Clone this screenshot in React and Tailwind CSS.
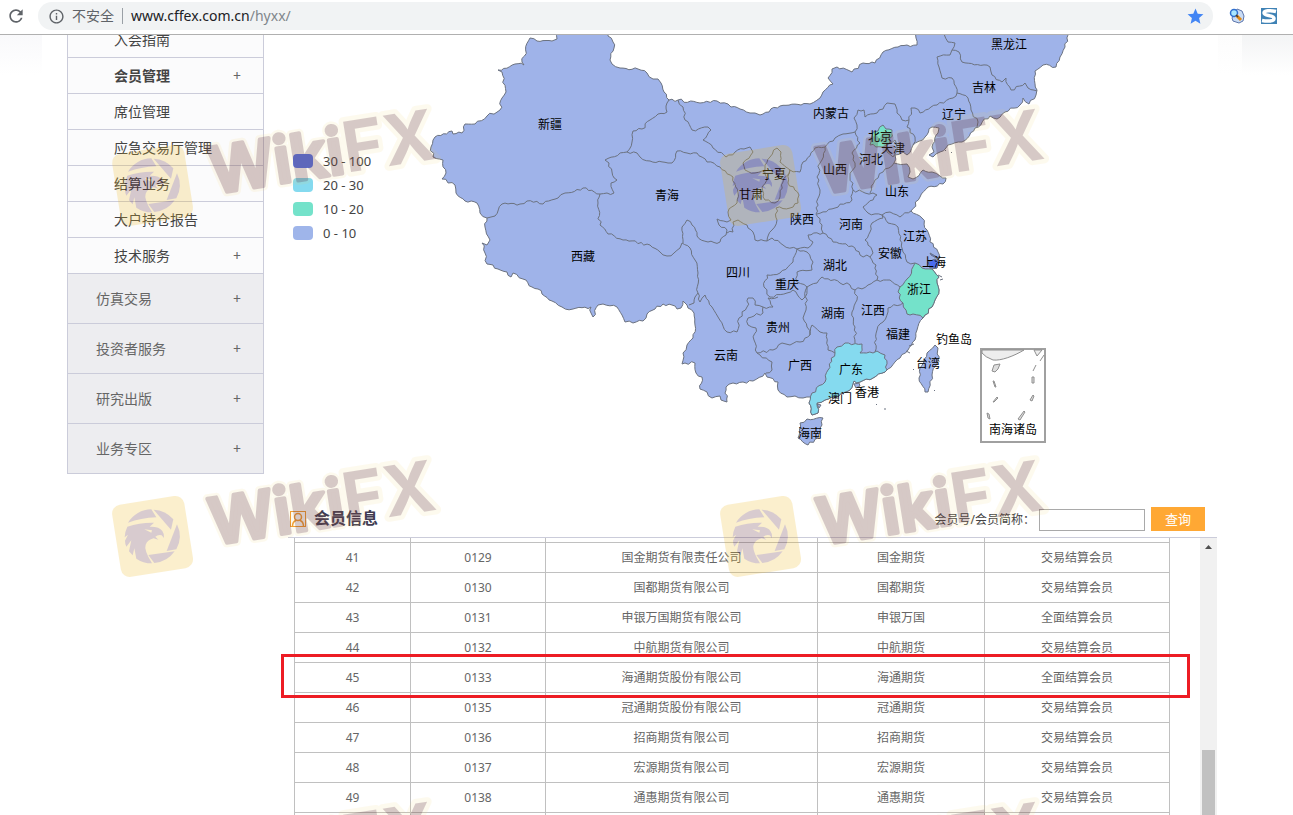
import { MdInfoOutline, MdRefresh, MdStar } from 'react-icons/md'

const subMenu = [
  { label: '入会指南' },
  { label: '会员管理', expandable: true, current: true },
  { label: '席位管理' },
  { label: '应急交易厅管理' },
  { label: '结算业务' },
  { label: '大户持仓报告' },
  { label: '技术服务', expandable: true },
]

const mainMenu = ['仿真交易', '投资者服务', '研究出版', '业务专区']

const legend = [
  { label: '30 - 100', color: 'bg-[#5475f0]' },
  { label: '20 - 30', color: 'bg-[#85daef]' },
  { label: '10 - 20', color: 'bg-[#74e2ca]' },
  { label: '0 - 10', color: 'bg-[#9fb5ea]' },
]

const members = [
  [41, '0129', '国金期货有限责任公司', '国金期货', '交易结算会员'],
  [42, '0130', '国都期货有限公司', '国都期货', '交易结算会员'],
  [43, '0131', '申银万国期货有限公司', '申银万国', '全面结算会员'],
  [44, '0132', '中航期货有限公司', '中航期货', '交易结算会员'],
  [45, '0133', '海通期货股份有限公司', '海通期货', '全面结算会员'],
  [46, '0135', '冠通期货股份有限公司', '冠通期货', '交易结算会员'],
  [47, '0136', '招商期货有限公司', '招商期货', '交易结算会员'],
  [48, '0137', '宏源期货有限公司', '宏源期货', '交易结算会员'],
  [49, '0138', '通惠期货有限公司', '通惠期货', '交易结算会员'],
]

const coast =
  '557,28 607,28 608,36 613,42 614,48 610,60 612,64 620,68 638,69 647,73 653,79 658,79 661,83 664,92 669,100 678,100 700,103 717,101 728,104 731,107 740,109 750,113 755,113 760,115 780,106 810,104 820,98 823,92 833,84 828,78 832,69 837,67 852,72 863,63 875,63 883,52 898,47 907,45 917,45 916,38 911,28 1070,28 1068,35 1065,47 1060,57 1056,67 1043,65 1035,71 1037,90 1036,95 1029,104 1023,98 1020,105 1005,112 997,119 990,116 975,128 962,142 948,145 940,152 933,157 929,155 934,152 932,147 938,133 939,128 932,127 925,137 913,145 907,155 903,152 895,155 894,163 907,164 910,172 908,177 913,179 923,170 932,172 940,176 946,178 943,184 928,187 920,197 911,211 922,218 927,230 930,242 938,252 939,258 937,268 932,269 939,277 937,283 939,290 935,300 932,307 925,315 923,318 917,330 915,340 908,350 900,358 888,369 885,372 873,378 860,382 854,381 850,390 835,397 825,400 817,403 818,413 812,415 809,403 811,397 803,398 795,396 787,397 778,390 778,382 767,377 765,373 753,381 743,382 733,383 726,387 727,402 721,400 720,396 712,398 707,392 700,389 702,377 696,373 695,363 685,363 682,364 683,353 687,345 693,338 695,325 694,313 688,308 687,305 683,301 681,308 677,309 672,305 663,304 655,309 647,314 643,321 633,323 625,322 622,315 617,307 603,304 598,305 593,317 591,313 591,307 573,309 562,307 552,301 542,294 538,289 532,287 523,279 513,273 511,277 507,272 498,269 493,265 487,264 485,253 482,243 487,245 490,240 485,227 487,218 480,213 477,203 465,201 456,193 455,185 442,179 446,173 443,160 433,157 431,147 435,137 452,131 453,134 462,133 465,124 475,124 487,116 500,110 502,98 506,92 502,72 498,70 515,64 524,65 522,62 530,38 537,41 552,41 557,39 557,28'

const borders = [
  // 新疆 / 甘肃 / 青海 / 西藏
  '669,100 667,103 667,112 658,114 650,120 642,129 633,131 632,142 627,152 605,160 609,163 612,172 617,180 611,183 614,193 600,194 583,188 565,193 558,198 543,204 527,201 520,204 502,204 495,216 487,218',
  '600,194 598,203 600,225 608,234 623,240 650,245 660,252 667,256 674,253 680,248 682,243 690,248 695,260 698,273 698,293 695,297 694,303 689,305',
  '627,152 637,153 640,157 650,161 668,163 672,163 677,151 687,153 697,153 707,162 720,167 733,177 738,193 737,203 728,212 731,220 727,222 717,219 719,225 727,230 726,235 720,242 708,242 697,236 692,225 687,220 682,227 683,243',
  '727,233 733,232 733,222 738,220 747,225 753,232 755,240 767,241 772,230 777,220 776,208 790,208 798,203 799,195 788,183 790,170',
  '678,100 683,107 685,120 692,130 708,127 711,130 703,140 713,148 726,157 735,152 750,147 753,152 743,163 745,170 755,173 765,170 765,165 770,157 777,148 781,152 780,162 790,170 800,172 803,162 815,148 825,147 835,138 843,134 855,132 857,125 854,118 858,110 864,110 865,117 877,113 883,109 887,103 895,104 897,113 902,120 909,120 911,108 915,108 920,113 937,105 953,98 957,93 952,78 942,78 939,67 937,57 950,55 952,50 955,43 948,42 944,34',
  '765,170 767,180 762,187 765,200 775,203 780,197 783,182 790,170',
  // 东北
  '952,50 959,52 962,62 990,67 992,75 1002,82 1006,78 1011,90 1025,83 1028,88 1037,91',
  '957,93 968,98 971,110 978,122 977,127',
  '909,120 907,127 915,137 913,145',
  // 华北
  '825,147 820,163 817,177 820,190 816,214 822,225 823,233 808,235 813,242 808,248 797,249 783,245 772,238 767,241',
  '855,132 860,143 852,153 855,163 850,177 853,190 852,200 835,208 817,214',
  '853,190 865,193 873,193 877,195 863,207 868,213 882,215 890,212 900,217 911,211',
  '870,193 875,180 883,172 894,163',
  '884,145 895,140 897,148 893,157 887,152 884,145',
  // 华中 / 华东
  '823,233 833,242 852,246 860,255 870,257 873,253 865,240 870,232 872,223 883,218 882,215 888,223 898,227 900,240 903,252 907,262 915,263',
  '870,257 876,265 877,280 890,280 900,287',
  '877,280 868,285 855,290 850,285 840,283 822,277 817,283 807,287 806,310 803,318 807,327 810,335 800,342 790,345 782,343 773,350 757,353',
  '855,290 857,300 852,312 855,327 855,343',
  '903,303 888,308 883,322 877,330 875,352',
  // 西南
  '797,249 793,262 780,273 767,275 764,287 770,297 787,293 793,290 802,300 805,297 807,287 797,282 797,272 812,270 813,262 807,252 797,249',
  '698,293 700,302 705,295 712,307 718,317 727,332 737,332 739,318 747,307 748,298 753,298 755,305 763,307 773,307 768,298 778,297',
  '763,307 763,313 748,318 748,325 756,328 754,340 757,353 772,362 772,370 766,373',
  '810,335 812,325 820,332 827,333 828,350 835,353',
]

const zhejiang =
  '915,263 922,268 932,269 939,277 937,283 939,290 935,300 932,307 925,315 923,318 913,314 907,314 903,303 898,292 900,287 907,279 915,263'
const guangdong =
  '835,353 837,347 845,343 862,344 860,353 873,353 877,351 885,355 887,370 885,372 873,378 860,382 854,381 850,390 835,397 825,400 817,403 818,413 812,415 809,403 812,393 825,382 828,370 835,353'
const beijing = '870,145 873,132 878,131 883,125 886,129 892,130 890,142 882,147 870,145'
const shanghai = '928,262 935,259 939,262 937,268 930,268 928,262'
const hainan = '800,423 807,419 823,418 822,425 818,438 808,445 798,438 800,423'
const taiwan = '935,345 938,348 938,360 932,375 928,392 925,392 919,378 920,368 927,353 935,345'

const provinces = [
  ['新疆', 550, 129], ['西藏', 583, 261], ['青海', 667, 200], ['甘肃', 751, 199],
  ['宁夏', 774, 179], ['内蒙古', 831, 118], ['黑龙江', 1009, 49], ['吉林', 984, 92],
  ['辽宁', 954, 119], ['北京', 880, 141], ['天津', 893, 153], ['河北', 871, 164],
  ['山西', 835, 174], ['山东', 897, 196], ['陕西', 802, 224], ['河南', 851, 229],
  ['江苏', 915, 241], ['安徽', 890, 258], ['上海', 934, 267], ['湖北', 835, 270],
  ['四川', 738, 277], ['重庆', 787, 289], ['浙江', 919, 294], ['湖南', 833, 318],
  ['江西', 873, 315], ['贵州', 778, 332], ['福建', 898, 339], ['云南', 726, 360],
  ['广西', 800, 370], ['广东', 851, 374], ['台湾', 928, 368], ['钓鱼岛', 954, 344],
  ['澳门', 840, 403], ['香港', 867, 397], ['海南', 810, 438], ['南海诸岛', 1013, 434],
]

function hash(x, y) {
  const n = Math.sin(x * 12.9898 + y * 78.233) * 43758.5453
  return n - Math.floor(n) - 0.5
}

// Splits every edge into short steps with a small sideways shift. The shift
// depends only on the edge itself, so neighbouring regions stay aligned.
function roughen(points) {
  const pts = points.split(' ').map((p) => p.split(',').map(Number))
  const out = [pts[0]]
  for (let i = 1; i < pts.length; i++) {
    const [ax, ay] = pts[i - 1]
    const [bx, by] = pts[i]
    const len = Math.hypot(bx - ax, by - ay) || 1
    const steps = Math.floor(len / 3)
    const sign = ax < bx || (ax === bx && ay < by) ? 1 : -1
    for (let s = 1; s < steps; s++) {
      const x = ax + ((bx - ax) * s) / steps
      const y = ay + ((by - ay) * s) / steps
      const shift = hash(Math.round(x * 10), Math.round(y * 10)) * 3 * sign
      out.push([x - ((by - ay) / len) * shift, y + ((bx - ax) / len) * shift])
    }
    out.push([bx, by])
  }
  return out.map(([x, y]) => `${x.toFixed(1)},${y.toFixed(1)}`).join(' ')
}

function ChinaMap() {
  return (
    <svg viewBox="423 35 794 460" className="block min-w-0 flex-1" role="img" aria-label="会员分布">
      <g stroke="#6b7280" strokeWidth="1" strokeLinejoin="round" fill="#9fb3e9">
        <polygon points={roughen(coast)} />
        {borders.map((line) => (
          <polyline key={line} points={roughen(line)} fill="none" />
        ))}
        <polygon points={roughen(hainan)} />
        <polygon points={roughen(taiwan)} />
        <polygon points={roughen(zhejiang)} fill="#74e2ca" />
        <polygon points={roughen(guangdong)} fill="#85daef" />
        <polygon points={roughen(beijing)} fill="#74e2ca" />
        <polygon points={shanghai} fill="#4a6cf0" />
        <path d="M930 253l7 4l1 2l-7-4z" fill="#5475f0" />
        <path d="M854 384l5-1l1 3l-4 2zM817 404l4 1l-2 3z" />
        <path d="M938 275l4 2M940 280l3-1M909 346l5-2M906 351l4 2M913 369l1 1M934 390l1 1M876 404l1 1M885 408v2M945 150l1 1M951 152l1 1" />
      </g>
      <g stroke="#8f8f8f" fill="none">
        <rect x="981" y="349" width="64" height="93" strokeWidth="2" stroke="#a0a0a0" />
        <path d="M982 350H1024C1014 356 1001 361 993 360Q985 357 982 353ZM1034 350h8l-5 6z" fill="#ededed" />
        <path
          d="M994 365l6-1l-2 5l-3 3l-3-1zM993 381l1 0l2 6l-1 0zM993 402l4-5l1 1l-4 4zM987 413l2 1l1 5l-2-1zM1018 419l6-8l1 1l-5 8zM1030 400l3-5l1 1l-2 5zM1032 377h2v6h-2zM1033 371l3-6M1040 361l4-6"
          fill="#ddd"
        />
      </g>
      <g className="font-['Noto_Sans','Noto_Sans_CJK_SC',sans-serif] text-[12px]" textAnchor="middle" fill="#000">
        {provinces.map(([name, x, y]) => (
          <text key={name} x={x} y={y}>
            {name}
          </text>
        ))}
      </g>
    </svg>
  )
}

function Watermark({ x, y }) {
  return (
    <g transform={`translate(${x} ${y})`}>
      <g opacity="0.22">
        <rect x="-36" y="-36" width="73" height="73" rx="9" transform="rotate(-9)" fill="#eeb921" />
        <g transform="translate(-44 -44) scale(0.3333)" fill="#52182a">
          <path d="M60 92A82 82 0 0 1 130 52L145 76Q98 78 60 92Z" />
          <path d="M137 53A82 82 0 0 1 196 82L189 113Z" />
          <path d="M207 97A82 82 0 0 1 205 172L176 177Z" />
          <path d="M200 178A82 82 0 0 1 139 213L121 189Z" />
          <path d="M58 104Q96 91 138 92L125 104Q154 103 163 117Q169 125 168 138L161 130Q150 127 142 134L151 143L137 139Q119 143 113 158Q107 173 132 214Q105 214 85 200L79 169L74 190L63 178L70 145L55 164Q51 154 51 146L60 128L50 136Q51 118 58 104ZM109 112L130 122L132 115Z" fillRule="evenodd" />
        </g>
      </g>
      <g transform="translate(61 9) rotate(-9)" className="font-['Inter','Liberation_Sans',sans-serif]">
        <text
          fill="#f5d060"
          stroke="#f5d060"
          strokeWidth="9"
          strokeLinejoin="round"
          opacity="0.1"
          className="text-[64px] font-semibold"
        >
          Wiki<tspan className="text-[70px] font-bold">FX</tspan>
        </text>
        <text
          fill="#4a1634"
          stroke="#4a1634"
          strokeWidth="4"
          strokeLinejoin="round"
          opacity="0.21"
          className="text-[64px] font-semibold"
        >
          Wiki
          <tspan strokeWidth="0" className="text-[70px] font-bold">
            FX
          </tspan>
        </text>
      </g>
    </g>
  )
}

function BrowserBar() {
  return (
    <header className="flex h-[35px] shrink-0 items-start border-b border-[#b0b0b0] bg-white pr-4 pl-1.5">
      <button type="button" aria-label="重新加载" className="mt-1.5 text-[#5f6368]">
        <MdRefresh size={20} />
      </button>
      <div className="mt-0.5 ml-3 flex h-7 flex-1 items-center rounded-full bg-[#f1f3f4] pr-2 pl-2.5">
        <MdInfoOutline size={17} className="text-[#5f6368]" />
        <span className="ml-[7px] text-sm text-[#5f6368]">不安全</span>
        <span className="mx-2 h-4 w-px bg-[#9aa0a6]" />
        <span className="text-sm text-[#202124]">
          www.cffex.com.cn<span className="text-[#80868b]">/hyxx/</span>
        </span>
        <button type="button" aria-label="收藏" className="ml-auto text-[#4285f4]">
          <MdStar size={19} />
        </button>
      </div>
      <button type="button" aria-label="搜索扩展" className="mt-2 ml-4">
        <svg width="16" height="16" viewBox="0 0 16 16">
          <path d="M8 1l5 2l2 5l-1 5l-4 2l-6-2l-1-3z" fill="#c9dcf5" stroke="#5d76ac" />
          <circle cx="5" cy="5" r="3.5" fill="#a9e7ff" stroke="#2f6fd0" strokeWidth="1.5" />
          <path d="M7.5 7.5l4.500 4.500" stroke="#e48a14" strokeWidth="3" />
          <path d="M7 7l2 2" stroke="#3c3c3c" strokeWidth="1.5" />
        </svg>
      </button>
      <button type="button" aria-label="S 扩展" className="mt-2 ml-4">
        <svg width="16" height="16" viewBox="0 0 16 16">
          <rect width="16" height="16" fill="#3f82b5" />
          <path d="M15 3.500C9 2 3 2.500 3 5C3 8 13 7 13 10.500C13 13.500 6 13.500 1 12.500" fill="none" stroke="#fff" strokeWidth="3.500" />
        </svg>
      </button>
    </header>
  )
}

function Sidebar() {
  return (
    <nav className="-mt-[13px] w-[197px] shrink-0 self-start border-x border-[#cbccda] text-sm">
      {subMenu.map((item) => (
        <a
          key={item.label}
          href="#"
          className={`flex h-9 items-center border-b border-[#cbccda] bg-[#fbfbfc] pr-[22px] pl-[46px] text-[#444] ${item.current ? 'font-bold' : ''}`}
        >
          {item.label}
          {item.expandable && <span className="ml-auto font-normal text-[#666]">+</span>}
        </a>
      ))}
      {mainMenu.map((label) => (
        <a
          key={label}
          href="#"
          className="flex h-[50px] items-center border-b border-[#cbccda] bg-[#ededf0] pr-[22px] pl-7 text-[#666]"
        >
          {label}
          <span className="ml-auto">+</span>
        </a>
      ))}
    </nav>
  )
}

function MemberTable() {
  return (
    <div className="relative min-h-0 flex-1">
      <div className="flex h-full overflow-hidden">
        <div className="min-w-0 flex-1 pr-[30px] pl-1.5">
          <table className="w-full table-fixed border-collapse text-center text-xs text-[#666]">
            <colgroup>
              <col className="w-[13.26%]" />
              <col className="w-[15.43%]" />
              <col className="w-[31.08%]" />
              <col className="w-[19.08%]" />
              <col className="w-[21.15%]" />
            </colgroup>
            <tbody>
              <tr className="h-1">
                {[0, 1, 2, 3, 4].map((i) => (
                  <td key={i} className="border-x border-b border-[#c0c0c0] p-0" />
                ))}
              </tr>
              {members.map((row) => (
                <tr key={row[0]} className="h-[30px]">
                  {row.map((cell, i) => (
                    <td key={i} className="border border-[#c0c0c0] p-0 pt-0.5">
                      {cell}
                    </td>
                  ))}
                </tr>
              ))}
              <tr className="h-[30px]">
                {[0, 1, 2, 3, 4].map((i) => (
                  <td key={i} className="border border-[#c0c0c0]" />
                ))}
              </tr>
            </tbody>
          </table>
        </div>
        <div className="flex w-[17px] shrink-0 flex-col items-center bg-[#f1f1f1]">
          <svg width="7" height="4" viewBox="0 0 7 4" className="mt-[7px] shrink-0">
            <path d="M3.500 0L7 4H0Z" fill="#505050" />
          </svg>
          <div className="mt-auto h-[65px] w-[13px] bg-[#c1c1c1]" />
        </div>
      </div>
      <div className="absolute top-[116px] right-[27px] -left-[7px] h-11 border-3 border-[#ed1c24]" />
    </div>
  )
}

export default function App() {
  return (
    <div className="relative flex h-screen flex-col overflow-hidden bg-white font-['Noto_Sans','Noto_Sans_CJK_SC',sans-serif]">
      <BrowserBar />
      <div className="relative flex min-h-0 flex-1 gap-6 overflow-hidden pr-[76px] pl-[67px]">
        <div className="absolute top-0 left-0 h-10 w-[42px] bg-linear-to-b from-[#f9f9fb] to-white" />
        <div className="absolute top-0 right-[51px] h-10 w-6 bg-linear-to-b from-[#fcfcfc] to-white" />
        <div className="absolute top-0 right-0 h-10 w-[51px] bg-linear-to-b from-[#f3f4f5] to-white" />
        <Sidebar />
        <main className="flex min-w-0 flex-1 flex-col">
          <div className="flex shrink-0 items-start">
            <ul className="mt-[115px] flex w-[135px] shrink-0 flex-col pl-[5px] text-[13px] text-[#444]">
              {legend.map((item) => (
                <li key={item.label} className="flex h-6 items-center gap-2.5">
                  <span className={`-mt-0.5 h-3.5 w-5 rounded-sm ${item.color}`} />
                  {item.label}
                </li>
              ))}
            </ul>
            <ChinaMap />
          </div>
          <div className="flex h-[43px] shrink-0 items-center border-b border-[#cbccda] pr-3">
            <svg width="18" height="18" viewBox="0 0 18 18" fill="none" stroke="#f19a2e" className="mt-1.5">
              <rect x="2.500" y="1.500" width="15" height="15" />
              <circle cx="10" cy="7" r="3.500" strokeWidth="1.500" />
              <path d="M4.500 16.500Q4.500 11.500 8 10.500M15.500 16.500Q15.500 11.500 12 10.500" strokeWidth="1.500" />
            </svg>
            <h2 className="mt-1 ml-2 text-base font-bold text-[#403c52]">会员信息</h2>
            <form className="mt-1.5 ml-auto flex items-center" onSubmit={(e) => e.preventDefault()}>
              <label htmlFor="member" className="mt-0.5 text-xs text-[#444]">
                会员号/会员简称：
              </label>
              <input id="member" type="text" className="mt-0.5 ml-1 h-[22px] w-[106px] border border-[#a9a9a9] bg-white px-1 text-xs" />
              <button type="submit" className="ml-1.5 h-6 w-[54px] bg-[#ffa834] pt-0.5 text-[13px] text-white">
                查询
              </button>
            </form>
          </div>
          <MemberTable />
        </main>
      </div>
      <svg className="pointer-events-none absolute inset-0 h-full w-full" aria-hidden="true">
        <Watermark x={152} y={185} />
        <Watermark x={760} y={185} />
        <Watermark x={152} y={536} />
        <Watermark x={760} y={536} />
        <Watermark x={152} y={878} />
        <Watermark x={760} y={878} />
      </svg>
    </div>
  )
}
